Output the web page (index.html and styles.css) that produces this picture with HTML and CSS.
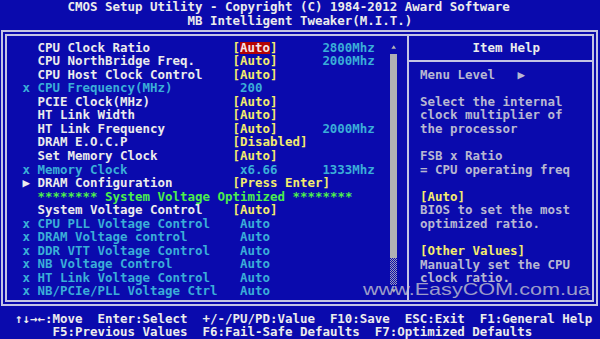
FILE: index.html
```html
<!DOCTYPE html>
<html lang="en">
<head>
    <meta charset="UTF-8">
    <meta name="viewport" content="width=device-width, initial-scale=1.0">
    <title>MB Intelligent Tweaker(M.I.T.)</title>
    <link rel="stylesheet" href="styles.css">
</head>
<body>

    <div class="screen">
        <header class="title">
            <div class="title-main">CMOS Setup Utility - Copyright (C) 1984-2012 Award Software</div>
            <div class="title-sub">MB Intelligent Tweaker(M.I.T.)</div>
        </header>

        <main class="frame">
            <section class="settings">
                <div class="list">
                    <div class="item"><span></span><span>CPU Clock Ratio</span><span class="val">[<span class="hl">Auto</span>]</span><span class="mhz">2800Mhz</span></div>
                    <div class="item"><span></span><span>CPU NorthBridge Freq.</span><span class="val">[Auto]</span><span class="mhz">2000Mhz</span></div>
                    <div class="item"><span></span><span>CPU Host Clock Control</span><span class="val">[Auto]</span></div>
                    <div class="item off"><span>x</span><span>CPU Frequency(MHz)</span><span> 200</span></div>
                    <div class="item"><span></span><span>PCIE Clock(MHz)</span><span class="val">[Auto]</span></div>
                    <div class="item"><span></span><span>HT Link Width</span><span class="val">[Auto]</span></div>
                    <div class="item"><span></span><span>HT Link Frequency</span><span class="val">[Auto]</span><span class="mhz">2000Mhz</span></div>
                    <div class="item"><span></span><span>DRAM E.O.C.P</span><span class="val">[Disabled]</span></div>
                    <div class="item"><span></span><span>Set Memory Clock</span><span class="val">[Auto]</span></div>
                    <div class="item off"><span>x</span><span>Memory Clock</span><span> x6.66</span><span class="mhz">1333Mhz</span></div>
                    <div class="item"><span>&#9654;</span><span>DRAM Configuration</span><span class="val">[Press Enter]</span></div>
                    <div class="item"><span></span><span class="banner">******** System Voltage Optimized ********</span></div>
                    <div class="item"><span></span><span>System Voltage Control</span><span class="val">[Auto]</span></div>
                    <div class="item off"><span>x</span><span>CPU PLL Voltage Control</span><span> Auto</span></div>
                    <div class="item off"><span>x</span><span>DRAM Voltage control</span><span> Auto</span></div>
                    <div class="item off"><span>x</span><span>DDR VTT Voltage Control</span><span> Auto</span></div>
                    <div class="item off"><span>x</span><span>NB Voltage Control</span><span> Auto</span></div>
                    <div class="item off"><span>x</span><span>HT Link Voltage Control</span><span> Auto</span></div>
                    <div class="item off"><span>x</span><span>NB/PCIe/PLL Voltage Ctrl</span><span> Auto</span></div>
                </div>
                <div class="scrollbar">
                    <div class="arrow">
                        <svg width="8" height="6" viewBox="0 0 8 6"><path d="M4 1 L6.5 5 H1.5 Z" fill="#b4b4b4"/></svg>
                    </div>
                    <div class="thumb"></div>
                    <div class="track"></div>
                    <div class="arrow">
                        <svg width="8" height="6" viewBox="0 0 8 6"><path d="M4 5 L6.5 1 H1.5 Z" fill="#b4b4b4"/></svg>
                    </div>
                </div>
            </section>

            <aside class="help">
                <div class="help-title">Item Help</div>
                <div class="help-body">
                    <p>Menu Level   &#9654;</p>
                    <p>Select the internal<br>clock multiplier of<br>the processor</p>
                    <p>FSB x Ratio<br>= CPU operating freq</p>
                    <p><span class="val">[Auto]</span><br>BIOS to set the most<br>optimized ratio.</p>
                    <p><span class="val">[Other Values]</span><br>Manually set the CPU<br>clock ratio.</p>
                </div>
            </aside>

            <div class="watermark">www.EasyCOM.com.ua</div>
        </main>

        <footer class="keys">
            <div class="keys-row first">
                <span>&#8593;&#8595;&#8594;&#8592;:Move</span>
                <span>Enter:Select</span>
                <span>+/-/PU/PD:Value</span>
                <span>F10:Save</span>
                <span>ESC:Exit</span>
                <span>F1:General Help</span>
            </div>
            <div class="keys-row second">
                <span>F5:Previous Values</span>
                <span>F6:Fail-Safe Defaults</span>
                <span>F7:Optimized Defaults</span>
            </div>
        </footer>
    </div>

</body>
</html>
```

FILE: styles.css
```css
body {
    margin: 0;
    background-color: #0a0aad;
    color: #ececec;
    font-family: "DejaVu Sans Mono", "Liberation Mono", monospace;
    font-size: 12.46px;
    font-weight: bold;
    line-height: 13.56px;
}
.screen {
    width: 600px;
    height: 339px;
    overflow: hidden;
}
.title div {
    height: 13.56px;
    white-space: pre;
}
.title-main {
    padding-left: 9ch;
}
.title-sub {
    padding-left: 25ch;
}

/* main double-lined box */
.frame {
    position: relative;
    display: flex;
    box-sizing: border-box;
    height: 276px;
    margin: 2.88px 2px 5.88px 1px;
    border: 6px double #c4c4e4;
}
.settings {
    display: flex;
    box-sizing: border-box;
    width: 400px;
    padding: 4.68px 0 0 15.5px;
}
.list {
    width: 49ch;
}
.item {
    display: grid;
    grid-template-columns: 2ch 26ch 12ch 7ch;
    height: 13.56px;
    white-space: pre;
}
.item.off {
    color: #3aaed8;
}
.val {
    color: #f4ec6c;
}
.hl {
    display: inline-block;
    height: 12px;
    margin-top: 1px;
    line-height: 12px;
    vertical-align: top;
    background-color: #b40404;
    color: #f6e6e6;
}
.mhz {
    color: #3aaed8;
}
.banner {
    grid-column: 2 / -1;
    color: #4cf04c;
}

.scrollbar {
    display: flex;
    flex-direction: column;
    width: 1ch;
}
.arrow {
    display: flex;
    align-items: center;
    justify-content: center;
    height: 13.56px;
}
.thumb {
    height: calc(13.56px * 15);
    background-color: #b0b0b4;
}
.track {
    height: calc(13.56px * 2);
    background: repeating-conic-gradient(#9c9cb8 0 25%, #0a0aad 0 50%) 0 0 / 2px 2px;
}

/* right help panel */
.help {
    flex: 1;
    border-left: 2px solid #c4c4e4;
}
.help-title {
    height: 13.56px;
    padding: 4.68px 0 5.76px 63.5px;
    border-bottom: 2px solid #c4c4e4;
    white-space: pre;
}
.help-body {
    padding: 5.8px 0 0 11px;
    color: #b8b8d2;
}
.help-body p {
    margin: 0 0 13.56px 0;
    white-space: pre;
}

.watermark {
    position: absolute;
    left: 356px;
    top: 245.5px;
    font-family: "Liberation Sans", Arial, sans-serif;
    font-weight: normal;
    font-size: 16.5px;
    line-height: 16.5px;
    color: rgba(196, 196, 210, 0.8);
    transform: scaleX(1.31);
    transform-origin: left top;
    white-space: nowrap;
}

.keys-row {
    display: flex;
    gap: 2ch;
    height: 13.56px;
    white-space: pre;
}
.keys-row.first {
    padding-left: 2ch;
}
.keys-row.second {
    padding-left: 7ch;
}
```
